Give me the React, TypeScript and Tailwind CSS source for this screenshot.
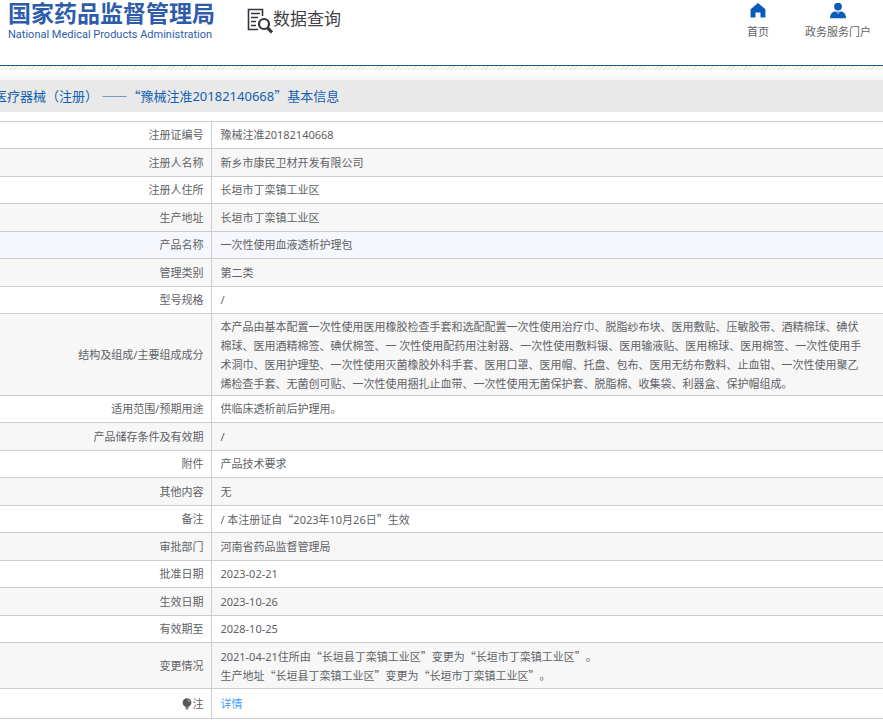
import type { ReactNode } from "react";

type Registro = {
  label: string;
  lines: string[];
  highlighted?: boolean;
};

const registros: Registro[] = [
  { label: "注册证编号", lines: ["豫械注准20182140668"] },
  { label: "注册人名称", lines: ["新乡市康民卫材开发有限公司"] },
  { label: "注册人住所", lines: ["长垣市丁栾镇工业区"] },
  { label: "生产地址", lines: ["长垣市丁栾镇工业区"] },
  { label: "产品名称", lines: ["一次性使用血液透析护理包"], highlighted: true },
  { label: "管理类别", lines: ["第二类"] },
  { label: "型号规格", lines: ["/"] },
  {
    label: "结构及组成/主要组成成分",
    lines: [
      "本产品由基本配置一次性使用医用橡胶检查手套和选配配置一次性使用治疗巾、脱脂纱布块、医用敷贴、压敏胶带、酒精棉球、碘伏",
      "棉球、医用酒精棉签、碘伏棉签、一 次性使用配药用注射器、一次性使用敷料镊、医用输液贴、医用棉球、医用棉签、一次性使用手",
      "术洞巾、医用护理垫、一次性使用灭菌橡胶外科手套、医用口罩、医用帽、托盘、包布、医用无纺布敷料、止血钳、一次性使用聚乙",
      "烯检查手套、无菌创可贴、一次性使用捆扎止血带、一次性使用无菌保护套、脱脂棉、收集袋、利器盒、保护帽组成。",
    ],
  },
  { label: "适用范围/预期用途", lines: ["供临床透析前后护理用。"] },
  { label: "产品储存条件及有效期", lines: ["/"] },
  { label: "附件", lines: ["产品技术要求"] },
  { label: "其他内容", lines: ["无"] },
  { label: "备注", lines: ["/ 本注册证自“2023年10月26日”生效"] },
  { label: "审批部门", lines: ["河南省药品监督管理局"] },
  { label: "批准日期", lines: ["2023-02-21"] },
  { label: "生效日期", lines: ["2023-10-26"] },
  { label: "有效期至", lines: ["2028-10-25"] },
  {
    label: "变更情况",
    lines: [
      "2021-04-21住所由“长垣县丁栾镇工业区”变更为“长垣市丁栾镇工业区”。",
      "生产地址“长垣县丁栾镇工业区”变更为“长垣市丁栾镇工业区”。",
    ],
  },
];

// Quotes and dashes take the full-width CJK glyphs, digits stay in Noto Sans
function Texto({ children }: { children: string }) {
  return (
    <>
      {children.split(/([“”—]+)/).map((part, i) =>
        i % 2 === 1 ? (
          <span key={i} className="font-['Noto_Sans_CJK_SC',sans-serif]">
            {part}
          </span>
        ) : (
          part
        )
      )}
    </>
  );
}

function SearchDocIcon() {
  return (
    <svg width="26" height="26" viewBox="0 0 26 26" fill="none" stroke="#35343f" aria-hidden="true">
      <path d="M15.5 8V1.5H1.5v20H11" strokeWidth="1.6" />
      <path d="M4 5.5h9M4 9.5h7M4 13.5h5M4 17.5h5" strokeWidth="1.6" />
      <circle cx="17" cy="16" r="5" strokeWidth="2.2" />
      <path d="M20.6 19.8 25 24.5" strokeWidth="3.2" />
    </svg>
  );
}

function HomeIcon() {
  return (
    <svg width="16" height="16" viewBox="0 0 16 16" fill="#0a5cba" aria-hidden="true">
      <path d="M8 0 15.4 6.2V14.5H10.5V9.5H5.5v5H.6V6.2z" />
    </svg>
  );
}

function UserIcon() {
  return (
    <svg width="16" height="16" viewBox="0 0 16 16" fill="#0a5cba" aria-hidden="true">
      <circle cx="8" cy="3.6" r="3.9" />
      <path d="M0 15.2c0-3.8 1.6-6 4.6-6.7h1.6L8 11.3l1.8-2.8h1.6c3 .7 4.6 2.9 4.6 6.7z" />
      <path d="M7.2 8.6h1.6L8.4 10.4h-.8z" />
    </svg>
  );
}

function BulbIcon() {
  return (
    <svg width="10" height="12" viewBox="0 0 10 12" aria-hidden="true">
      <circle cx="5" cy="4.6" r="4.4" fill="#555759" />
      <path d="M3.2 8.4h3.6L6.2 11.4H3.8z" fill="#7b7d80" />
      <path d="M5.5 2c1.2.1 1.9.9 2 2" stroke="#d5d5d5" strokeWidth="1" fill="none" />
    </svg>
  );
}

function Row({
  label,
  highlighted,
  children,
}: {
  label: ReactNode;
  highlighted?: boolean;
  children: ReactNode;
}) {
  return (
    <tr
      className={`border-b border-[#cccccc] odd:h-[27px] even:h-7 ${
        highlighted ? "bg-[#f5f7fc]" : "bg-white even:bg-[#f7f7f7]"
      }`}
    >
      <th
        scope="row"
        className="w-[24%] border-r border-[#cccccc] pr-2 text-right align-middle font-normal"
      >
        {label}
      </th>
      <td className="pl-2 align-middle whitespace-nowrap">{children}</td>
    </tr>
  );
}

function lineClass(count: number) {
  if (count > 2) return "pt-[3px] pb-0.5 leading-[19px]";
  if (count > 1) return "pt-1 pb-[3px]";
  return "";
}

export default function App() {
  return (
    <div
      lang="zh-CN"
      className="min-h-screen overflow-x-hidden bg-white font-['Noto_Sans','Noto_Sans_CJK_SC',sans-serif] text-[11px] leading-[18px] text-[#606266] [text-spacing-trim:space-all]"
    >
      <header className="flex h-[66px] items-start justify-between border-b border-[#1c5a8c] pr-3 pl-2">
        <div className="flex items-start gap-8">
          <a href="#" className="flex flex-col text-[#2d5cab]">
            <span className="text-[23px] leading-[26px] font-bold whitespace-nowrap">
              国家药品监督管理局
            </span>
            <span className="font-[Roboto,sans-serif] text-[11px] leading-[18px] whitespace-nowrap">
              National Medical Products Administration
            </span>
          </a>
          <a href="#" className="flex items-start pt-2 text-[17px] leading-[22px] text-[#3f3f45]">
            <SearchDocIcon />
            <span>数据查询</span>
          </a>
        </div>

        <nav className="flex gap-9 pt-[3px]">
          <a href="#" className="flex flex-col items-center gap-1">
            <HomeIcon />
            <span>首页</span>
          </a>
          <a href="#" className="flex flex-col items-center gap-1">
            <UserIcon />
            <span>政务服务门户</span>
          </a>
        </nav>
      </header>

      <main>
        <div className="h-1 bg-[repeating-linear-gradient(135deg,#e4e4e4_0px,#e4e4e4_1px,#ffffff_1px,#ffffff_3px)]" />
        <div className="h-2.5 bg-linear-to-b from-white to-[#f5f5f5]" />
        <h1 className="mb-2.5 bg-[#e9e9e9] text-[13px] leading-[31px] whitespace-nowrap text-[#1360b0]">
          <span className="-ml-1.5">
            <Texto>医疗器械（注册） ——“豫械注准20182140668”基本信息</Texto>
          </span>
        </h1>

        <table className="-mt-px w-full table-fixed border-collapse border-t border-[#cccccc]">
          <tbody>
            {registros.map((registro) => (
              <Row
                key={registro.label}
                label={registro.label}
                highlighted={registro.highlighted}
              >
                <div className={lineClass(registro.lines.length)}>
                  {registro.lines.map((line) => (
                    <p key={line}>
                      <Texto>{line}</Texto>
                    </p>
                  ))}
                </div>
              </Row>
            ))}
            <Row
              label={
                <span className="flex items-center justify-end">
                  <BulbIcon />注
                </span>
              }
            >
              <a href="#" className="block pt-1.5 pb-[5px] text-[#409eff]">
                详情
              </a>
            </Row>
          </tbody>
        </table>
      </main>
    </div>
  );
}
